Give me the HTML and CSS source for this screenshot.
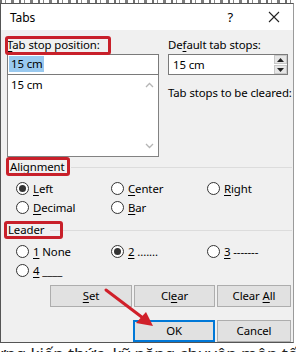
FILE: index.html
```html
<!DOCTYPE html>
<html>
<head>
<meta charset="utf-8">
<link rel="stylesheet" href="styles.css">
</head>
<body>
<div class="doc-top"></div>
<div class="dialog">
  <div class="titlebar">
    <span class="title">Tabs</span>
    <span class="help">?</span>
    <svg class="close" width="12" height="12" viewBox="0 0 12 12"><path d="M1 1 L11 11 M11 1 L1 11" stroke="#222" stroke-width="1.1" fill="none"/></svg>
  </div>
  <div class="content">
    <div class="top-row">
      <div class="col-left">
        <div class="label"><u>T</u>ab stop position:</div>
        <div class="input"><span class="sel">15 cm</span></div>
        <div class="list">
          <div class="list-item">15 cm</div>
          <div class="scroll">
            <svg width="9" height="6" viewBox="0 0 9 6"><path d="M1 5 L4.5 1.5 L8 5" stroke="#b5b5b5" stroke-width="1.3" fill="none"/></svg>
            <svg width="9" height="6" viewBox="0 0 9 6"><path d="M1 1 L4.5 4.5 L8 1" stroke="#b5b5b5" stroke-width="1.3" fill="none"/></svg>
          </div>
        </div>
      </div>
      <div class="col-right">
        <div class="label">De<u>f</u>ault tab stops:</div>
        <div class="spin">
          <span class="spin-val">15 cm</span>
          <div class="spin-btns">
            <div class="sbtn"><svg width="7" height="4" viewBox="0 0 7 4"><path d="M0 4 L3.5 0 L7 4Z" fill="#222"/></svg></div>
            <div class="sbtn"><svg width="7" height="4" viewBox="0 0 7 4"><path d="M0 0 L3.5 4 L7 0Z" fill="#222"/></svg></div>
          </div>
        </div>
        <div class="label cleared">Tab stops to be cleared:</div>
      </div>
    </div>

    <div class="group-head align-head"><span class="group-title">Alignment</span><span class="group-line"></span></div>
    <div class="radios">
      <label class="radio"><span class="dot on"></span><span><u>L</u>eft</span></label>
      <label class="radio"><span class="dot"></span><span><u>C</u>enter</span></label>
      <label class="radio"><span class="dot"></span><span><u>R</u>ight</span></label>
      <label class="radio"><span class="dot"></span><span><u>D</u>ecimal</span></label>
      <label class="radio"><span class="dot"></span><span><u>B</u>ar</span></label>
    </div>

    <div class="group-head leader-head"><span class="group-title">Leader</span><span class="group-line"></span></div>
    <div class="radios">
      <label class="radio"><span class="dot"></span><span><u>1</u> None</span></label>
      <label class="radio"><span class="dot on"></span><span><u>2</u> .......</span></label>
      <label class="radio"><span class="dot"></span><span><u>3</u> -------</span></label>
      <label class="radio"><span class="dot"></span><span><u>4</u> ____</span></label>
    </div>

    <div class="btn-row row1">
      <div class="btn w82"><span><u>S</u>et</span></div>
      <div class="btn w81"><span>Cl<u>e</u>ar</span></div>
      <div class="btn w74"><span>Clear <u>A</u>ll</span></div>
    </div>
    <div class="btn-row row2">
      <div class="btn w82 default"><span>OK</span></div>
      <div class="btn w74"><span>Cancel</span></div>
    </div>
  </div>
</div>
<div class="doc-bottom"><span class="doc-line">ưng kiến thức, kỹ năng chuyên môn tốt nh</span></div>

<div class="mark m1"></div>
<div class="mark m2"></div>
<div class="mark m3"></div>
<svg class="arrow" width="296" height="352" viewBox="0 0 296 352">
  <path d="M106 290 L143 318" stroke="#d0202a" stroke-width="3" stroke-linecap="round" fill="none"/>
  <path d="M153 326 L136 323 L146 312 Z" fill="#d0202a"/>
</svg>
</body>
</html>
```
FILE: styles.css
```css
* { box-sizing: border-box; }
html, body { margin: 0; padding: 0; }
body {
  width: 296px;
  height: 352px;
  overflow: hidden;
  background: #fff;
  font-family: "Noto Sans", "Segoe UI", sans-serif;
  font-size: 11.4px;
  letter-spacing: -0.1px;
  color: #000;
  position: relative;
}
u { text-decoration: underline; text-underline-offset: 2px; }

.doc-top {
  height: 3px;
  background:
    repeating-linear-gradient(90deg, #333 0 2px, #fff 2px 5px, #555 5px 6px, #fff 6px 11px, #444 11px 14px, #fff 14px 19px);
  opacity: 0.7;
}
.doc-bottom {
  height: 9px;
  overflow: hidden;
  background: #fff;
  padding-top: 1px;
}
.doc-bottom .doc-line {
  display: block;
  margin-left: -6px;
  font-size: 17px;
  line-height: 20px;
  color: #222;
  white-space: nowrap;
}

.dialog {
  width: 294px;
  height: 340px;
  border: 1px solid #555;
  border-right-color: #9a9a9a;
  background: #f0f0f0;
  display: flex;
  flex-direction: column;
}
.titlebar {
  height: 26px;
  background: #fff;
  display: flex;
  align-items: center;
  padding-left: 9px;
  flex: none;
}
.title { font-size: 12px; }
.help { margin-left: auto; margin-right: 35px; font-size: 13px; }
.close { margin-right: 13px; }

.content {
  padding: 7px 0 0 6px;
  flex: 1;
}
.top-row { display: flex; gap: 9px; }
.col-left { width: 152px; }
.col-right { width: 120px; }
.label { height: 16px; line-height: 16px; margin-bottom: 1px; white-space: nowrap; }
.cleared { margin-top: 10px; }

.input {
  height: 21px;
  border: 1px solid #7a7a7a;
  background: #fff;
  padding: 1px 0 0 1px;
}
.sel {
  display: inline-block;
  background: #99c9ef;
  line-height: 16px;
  padding: 0 1px 0 2px;
}
.list {
  height: 82px;
  border: 1px solid #828282;
  border-top: none;
  background: #fff;
  display: flex;
}
.list-item { flex: 1; padding: 2px 0 0 3px; line-height: 16px; }
.scroll {
  width: 17px;
  display: flex;
  flex-direction: column;
  justify-content: space-between;
  align-items: center;
  padding: 7px 0 7px 0;
}
.spin {
  height: 21px;
  border: 1px solid #7a7a7a;
  background: #fff;
  display: flex;
  align-items: center;
  padding-left: 4px;
}
.spin-val { flex: 1; line-height: 16px; }
.spin-btns {
  width: 13px;
  height: 19px;
  display: flex;
  flex-direction: column;
  gap: 1px;
}
.sbtn {
  flex: 1;
  background: #e6e6e6;
  border: 1px solid #c8c8c8;
  display: flex;
  align-items: center;
  justify-content: center;
}

.group-head {
  display: flex;
  align-items: center;
  height: 16px;
  line-height: 16px;
  padding-left: 3px;
}
.align-head { margin-top: 2px; }
.leader-head { margin-top: 5px; padding-left: 1px; }
.group-line {
  flex: 1;
  height: 1px;
  background: #dcdcdc;
  margin-left: 6px;
  margin-right: 1px;
}
.radios {
  display: grid;
  grid-template-columns: 95px 96px 1fr;
  padding-left: 9px;
  margin-top: 4px;
}
.radio {
  display: flex;
  align-items: center;
  gap: 4px;
  height: 19px;
  white-space: nowrap;
}
.dot {
  width: 13px;
  height: 13px;
  border-radius: 50%;
  border: 1px solid #333;
  background: #fff;
  display: flex;
  align-items: center;
  justify-content: center;
  flex: none;
}
.dot.on::after {
  content: "";
  width: 7px;
  height: 7px;
  border-radius: 50%;
  background: #333;
}

.btn-row {
  display: flex;
  justify-content: flex-end;
  gap: 2px;
  padding-right: 2px;
}
.row1 { margin-top: 5px; }
.row2 { margin-top: 13px; }
.btn {
  height: 22px;
  background: #e1e1e1;
  border: 1px solid #adadad;
  display: flex;
  align-items: center;
  justify-content: center;
  line-height: 16px;
}
.w82 { width: 82px; }
.w81 { width: 81px; }
.w74 { width: 74px; }
.btn.default { border: 2px solid #0078d7; }

.mark {
  position: absolute;
  border: 3px solid #c8202a;
  border-radius: 3px;
}
.m1 { left: 5px; top: 36px; width: 106px; height: 19px; }
.m2 { left: 6px; top: 157px; width: 64px; height: 19px; }
.m3 { left: 4px; top: 221px; width: 59px; height: 18px; }
.arrow { position: absolute; left: 0; top: 0; pointer-events: none; }
```
